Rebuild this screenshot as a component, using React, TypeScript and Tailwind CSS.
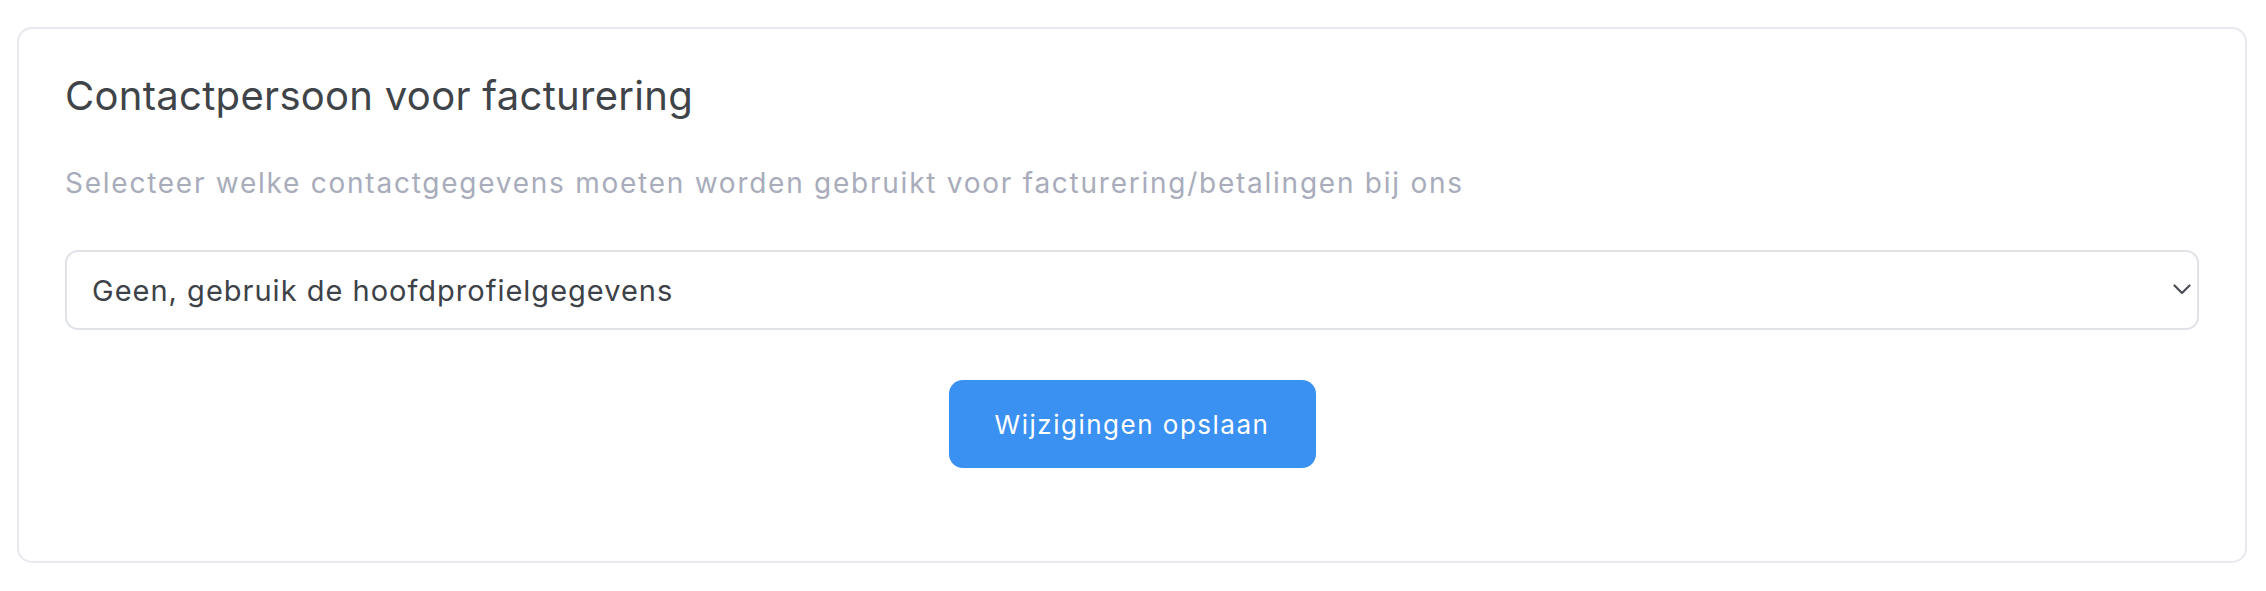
import React from "react";

export default function App() {
  return (
    <div className="w-[2266px] h-[591px] bg-white pt-[27px] pl-[17px] pr-[19px]" style={{ fontFamily: "Inter, 'Noto Sans', sans-serif" }}>
      <div className="h-[536px] rounded-[15px] border-2 border-[#e8e9ee] bg-white px-[46px] pt-[43px] flex flex-col">
        <h2 className="text-[40px] leading-[47px] text-[#3f4449] font-normal tracking-[0.3px]">
          Contactpersoon voor facturering
        </h2>
        <p className="mt-[48px] text-[28px] leading-[33px] text-[#a8acbb] tracking-[1.75px]">
          Selecteer welke contactgegevens moeten worden gebruikt voor facturering/betalingen bij ons
        </p>
        <button
          type="button"
          className="mt-[50px] h-[80px] w-full rounded-[13px] border-2 border-[#dfe2e6] bg-white pl-[25px] pr-[6px] flex items-center justify-between text-left"
        >
          <span className="text-[29px] leading-none text-[#3d4248] tracking-[1px]">
            Geen, gebruik de hoofdprofielgegevens
          </span>
          <svg width="18" height="11" viewBox="0 0 18 11" fill="none" className="mt-[-1px]">
            <path d="M1.5 1.5 L9 9 L16.5 1.5" stroke="#4a4f56" strokeWidth="2.2" strokeLinecap="round" strokeLinejoin="round" />
          </svg>
        </button>
        <div className="mt-[50px] flex justify-center">
          <button
            type="button"
            className="h-[88px] w-[367px] rounded-[14px] bg-[#3b91f2] text-white text-[26px] tracking-[1.5px] flex items-center justify-center"
          >
            Wijzigingen opslaan
          </button>
        </div>
      </div>
    </div>
  );
}
